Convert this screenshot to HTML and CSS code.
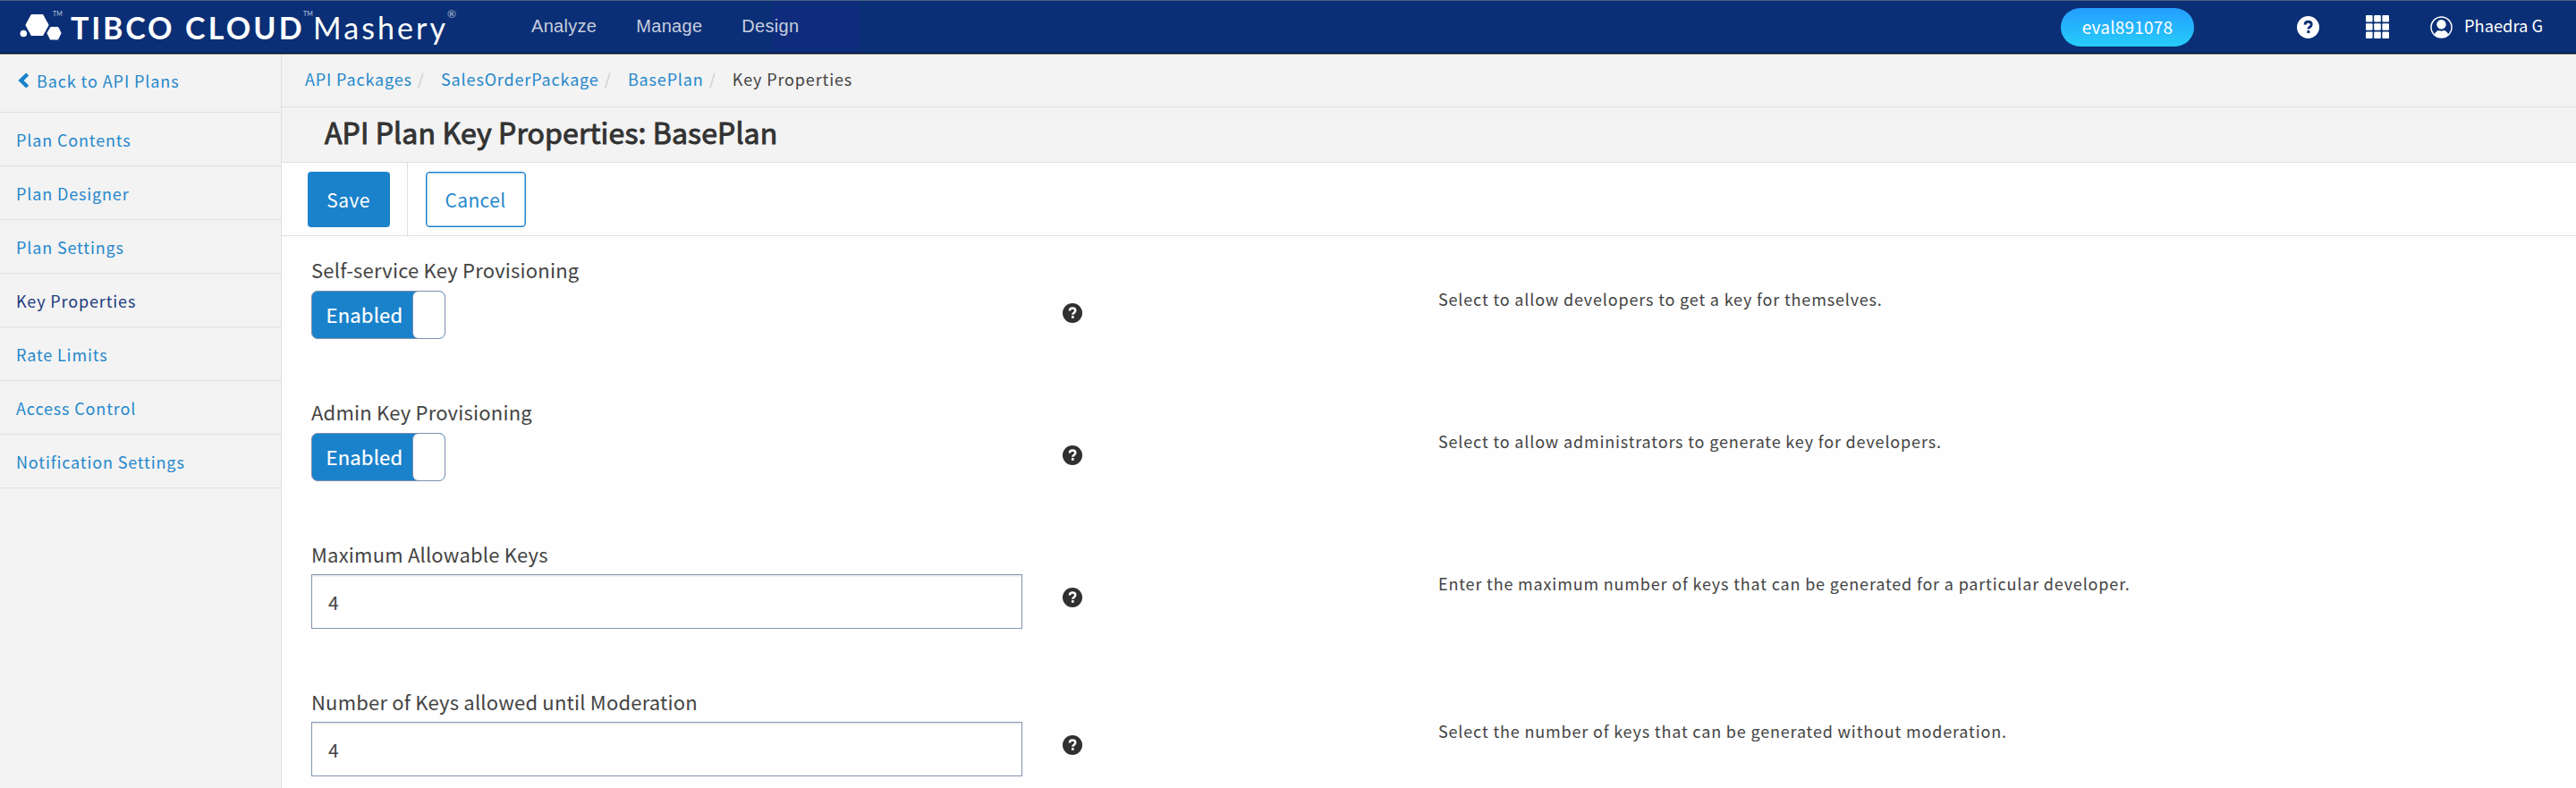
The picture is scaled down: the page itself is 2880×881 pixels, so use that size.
FILE: index.html
```html
<!DOCTYPE html>
<html lang="en">
<head>
<meta charset="utf-8">
<title>API Plan Key Properties</title>
<link rel="stylesheet" href="styles.css">
</head>
<body>
<svg width="0" height="0" class="defs">
  <symbol id="help" viewBox="0 0 24 24">
    <circle cx="12" cy="12" r="12" fill="currentColor"/>
    <path d="M8.6 9.3C8.700 7.200 10 6 12.100 6s3.500 1.200 3.500 3c0 2.600-3.300 2.700-3.300 5" fill="none" stroke="var(--mark)" stroke-width="2.700"/>
    <rect x="10.900" y="15.400" width="2.900" height="2.900" fill="var(--mark)"/>
  </symbol>
</svg>
<header class="topbar">
  <a class="brand">
    <svg class="brand-mark" width="46" height="32" viewBox="0 0 46 32" fill="#fff" stroke="#fff" stroke-width="2" stroke-linejoin="round">
      <path d="M13.500 3h12l6 11-6 11h-12l-6-11z"/>
      <path d="M35 17h7.500l3 6-3.200 6.500h-7.500l-3.300-6.500z"/>
      <circle cx="4.300" cy="23.500" r="2.800"/>
    </svg>
    <sup class="tm tm-mark">TM</sup>
    <span class="brand-bold">TIBCO</span>
    <span class="brand-bold cloud">CLOUD</span>
    <sup class="tm">TM</sup>
    <span class="brand-light">Mashery</span>
    <sup class="reg">®</sup>
  </a>
  <nav class="mainnav"><a>Analyze</a><a>Manage</a><a>Design</a></nav>
  <div class="account">
    <span class="pill">eval891078</span>
    <svg class="icon-help" width="25" height="25"><use href="#help"/></svg>
    <svg class="icon-grid" width="26" height="26" viewBox="0 0 26 26" fill="#fff">
      <rect width="7.600" height="7.600" rx="1"/><rect x="9.200" width="7.600" height="7.600" rx="1"/><rect x="18.400" width="7.600" height="7.600" rx="1"/>
      <rect y="9.200" width="7.600" height="7.600" rx="1"/><rect x="9.200" y="9.200" width="7.600" height="7.600" rx="1"/><rect x="18.400" y="9.200" width="7.600" height="7.600" rx="1"/>
      <rect y="18.400" width="7.600" height="7.600" rx="1"/><rect x="9.200" y="18.400" width="7.600" height="7.600" rx="1"/><rect x="18.400" y="18.400" width="7.600" height="7.600" rx="1"/>
    </svg>
    <svg class="icon-user" width="25" height="25" viewBox="0 0 25 25">
      <circle cx="12.500" cy="12.500" r="11.500" fill="none" stroke="#fff" stroke-width="1.500"/>
      <circle cx="12.500" cy="9.200" r="5.200" fill="#fff"/>
      <path d="M4.800 20.500c1-3 3.500-4.600 5-4.600 1.500 1 3.900 1 5.400 0 1.500 0 4 1.600 5 4.600a11 11 0 0 1-15.400 0z" fill="#fff"/>
    </svg>
    <span class="user">Phaedra G</span>
  </div>
</header>
<div class="layout">
  <aside class="sidebar">
    <a class="back"><svg width="13" height="18" viewBox="0 0 13 18"><path d="M10.700 2L3.500 9l7.200 7" fill="none" stroke="#1a82cb" stroke-width="4.400"/></svg>Back to API Plans</a>
    <a>Plan Contents</a>
    <a>Plan Designer</a>
    <a>Plan Settings</a>
    <a class="active">Key Properties</a>
    <a>Rate Limits</a>
    <a>Access Control</a>
    <a>Notification Settings</a>
  </aside>
  <main class="main">
    <div class="breadcrumb">
      <a>API Packages</a><i>/</i><a>SalesOrderPackage</a><i>/</i><a>BasePlan</a><i>/</i><span>Key Properties</span>
    </div>
    <h1 class="title">API Plan Key Properties: BasePlan</h1>
    <div class="toolbar">
      <div class="tool-save"><button class="btn btn-primary">Save</button></div>
      <button class="btn btn-outline">Cancel</button>
    </div>
    <div class="form">
      <div class="row">
        <div><div class="label">Self-service Key Provisioning</div><div class="switch"><span>Enabled</span><b></b></div></div>
        <svg class="info" width="22" height="22"><use href="#help"/></svg>
        <p>Select to allow developers to get a key for themselves.</p>
      </div>
      <div class="row">
        <div><div class="label">Admin Key Provisioning</div><div class="switch"><span>Enabled</span><b></b></div></div>
        <svg class="info" width="22" height="22"><use href="#help"/></svg>
        <p>Select to allow administrators to generate key for developers.</p>
      </div>
      <div class="row row-input">
        <div><div class="label">Maximum Allowable Keys</div><input class="field" value="4"></div>
        <svg class="info" width="22" height="22"><use href="#help"/></svg>
        <p>Enter the maximum number of keys that can be generated for a particular developer.</p>
      </div>
      <div class="row row-input">
        <div><div class="label">Number of Keys allowed until Moderation</div><input class="field" value="4"></div>
        <svg class="info" width="22" height="22"><use href="#help"/></svg>
        <p>Select the number of keys that can be generated without moderation.</p>
      </div>
    </div>
  </main>
</div>
</body>
</html>
```
FILE: styles.css
```css
* { box-sizing: border-box; }
body {
  margin: 0;
  display: flex;
  flex-direction: column;
  height: 881px;
  overflow: hidden;
  background: #fefefe;
  color: #444;
  font-family: "Noto Sans CJK JP", "Noto Sans", sans-serif;
  font-size: 18px;
}
.defs { position: absolute; }

.topbar {
  display: flex;
  flex: none;
  height: 61px;
  border-top: 1px solid #48617f;
  border-bottom: 1px solid #7d7b7d;
  box-shadow: inset 0 -1px #020d24;
  background: linear-gradient(90deg, #0b2f76 864px, #0f2b7c 864px, #0f2b7c 960px, #0b2f76 960px);
  color: #fff;
}
.brand { display: flex; width: 594px; padding-left: 22px; font-family: Lato, sans-serif; line-height: 34px; white-space: nowrap; }
.brand-mark { margin-top: 13px; overflow: visible; }
.brand-bold { margin-top: 13px; font-size: 34px; font-weight: 700; letter-spacing: 2.8px; width: 128px; flex: none; }
.cloud { width: 132px; letter-spacing: 3.2px; }
.brand-light { margin-top: 13px; font-size: 34px; font-weight: 400; letter-spacing: 3.1px; width: 150px; flex: none; }
.tm { width: 11px; margin-top: 10px; font-size: 7px; line-height: 8px; color: #b9c6dd; }
.tm-mark { width: 11px; margin-left: -9px; margin-right: 9px; }
.reg { margin-top: 9px; font-size: 12px; line-height: 12px; color: #b9c6dd; }

.mainnav { display: flex; gap: 44px; font: 20px/57px "Liberation Sans", sans-serif; letter-spacing: .3px; color: #c6cede; }

.account { display: flex; margin-left: auto; padding-right: 38px; }
.pill {
  width: 149px; height: 43px; margin-top: 8px;
  border-radius: 22px;
  background: linear-gradient(#249dff, #27cdf9);
  font-size: 19px; line-height: 42px; letter-spacing: .2px; text-align: center;
}
.icon-help { --mark: #0b2f76; margin: 17px 52px 0 115px; }
.icon-grid { margin-top: 16px; }
.icon-user { margin: 17px 13px 0 46px; }
.user { width: 87px; font-size: 18.3px; line-height: 55px; white-space: nowrap; }

.layout { display: flex; flex: 1; min-height: 0; }
.sidebar { width: 315px; flex: none; border-right: 1px solid #dfdfdf; background: #f3f3f3; }
.sidebar a {
  display: flex; align-items: center;
  height: 60px; padding-left: 18px;
  border-bottom: 1px solid #e0e0e0;
  color: #2688cc; letter-spacing: .85px;
}
.sidebar .back { height: 65px; padding: 0 0 6px 20px; letter-spacing: .9px; }
.back svg { margin-right: 8px; }
.sidebar .active { color: #1c3d7e; }

.main { flex: 1; }
.breadcrumb {
  display: flex; align-items: center;
  height: 59px; padding: 0 0 5px 26px;
  border-bottom: 1px solid #e0e0e0; background: #f3f3f3;
  letter-spacing: .85px;
}
.breadcrumb a { color: #2688cc; }
.breadcrumb i { width: 32.2px; padding-left: 6px; font-style: normal; color: #ccc; }
.title {
  margin: 0; height: 62px; padding: 0 0 7px 48px;
  border-bottom: 1px solid #dfdfdf; background: #f3f3f3;
  color: #333; font-size: 32px; font-weight: 400; line-height: 54px; letter-spacing: .12px;
  -webkit-text-stroke: 1px #333;
}
.toolbar { display: flex; height: 82px; border-bottom: 1px solid #e0e0e0; align-items: center; }
.tool-save { display: flex; align-items: center; width: 141px; height: 81px; padding-left: 28.500px; margin-right: 19.500px; border-right: 1px solid #e0e0e0; }
.btn { height: 62px; border-radius: 4px; padding: 0; font: 21px "Noto Sans CJK JP", sans-serif; letter-spacing: .4px; }
.btn-primary { width: 92px; border: 0; background: #1a82cb; color: #fff; }
.btn-outline { width: 112px; border: 1px solid #1a82cb; box-shadow: inset 0 0 0 .5px #1a82cb; background: #fff; color: #2688cc; }

.form { padding: 22px 0 0 33px; }
.row { display: grid; grid-template-columns: 840px 420px 1fr; height: 159px; align-items: start; }
.row-input { height: 165px; }
.label { height: 30px; font-size: 22px; line-height: 30px; letter-spacing: .2px; }
.switch {
  display: flex; width: 150px; height: 54px; margin-top: 9px;
  border: 1px solid #7f8fae; border-radius: 7px; background: #1a82cb;
  color: #fff; font-size: 22px; line-height: 50px; letter-spacing: .2px;
  -webkit-text-stroke: .2px #fff;
}
.switch span { width: 112px; padding-left: 15.500px; }
.switch b { flex: 1; border-left: 1px solid #7f8fae; border-radius: 6px; background: #fff; }
.field {
  display: block; width: 795px; height: 61px; margin-top: 8px; padding: 0 0 0 18px;
  border: 1px solid #8494b2; border-radius: 0; background: #fff; box-shadow: inset 0 2px 2px rgba(0,0,0,.07);
  color: #444; font: 21px "Noto Sans CJK JP", sans-serif;
}
.info { --mark: #fff; margin-top: 53px; color: #303030; }
.row p { margin: 36px 0 0; line-height: 24px; letter-spacing: .83px; white-space: nowrap; }
```
